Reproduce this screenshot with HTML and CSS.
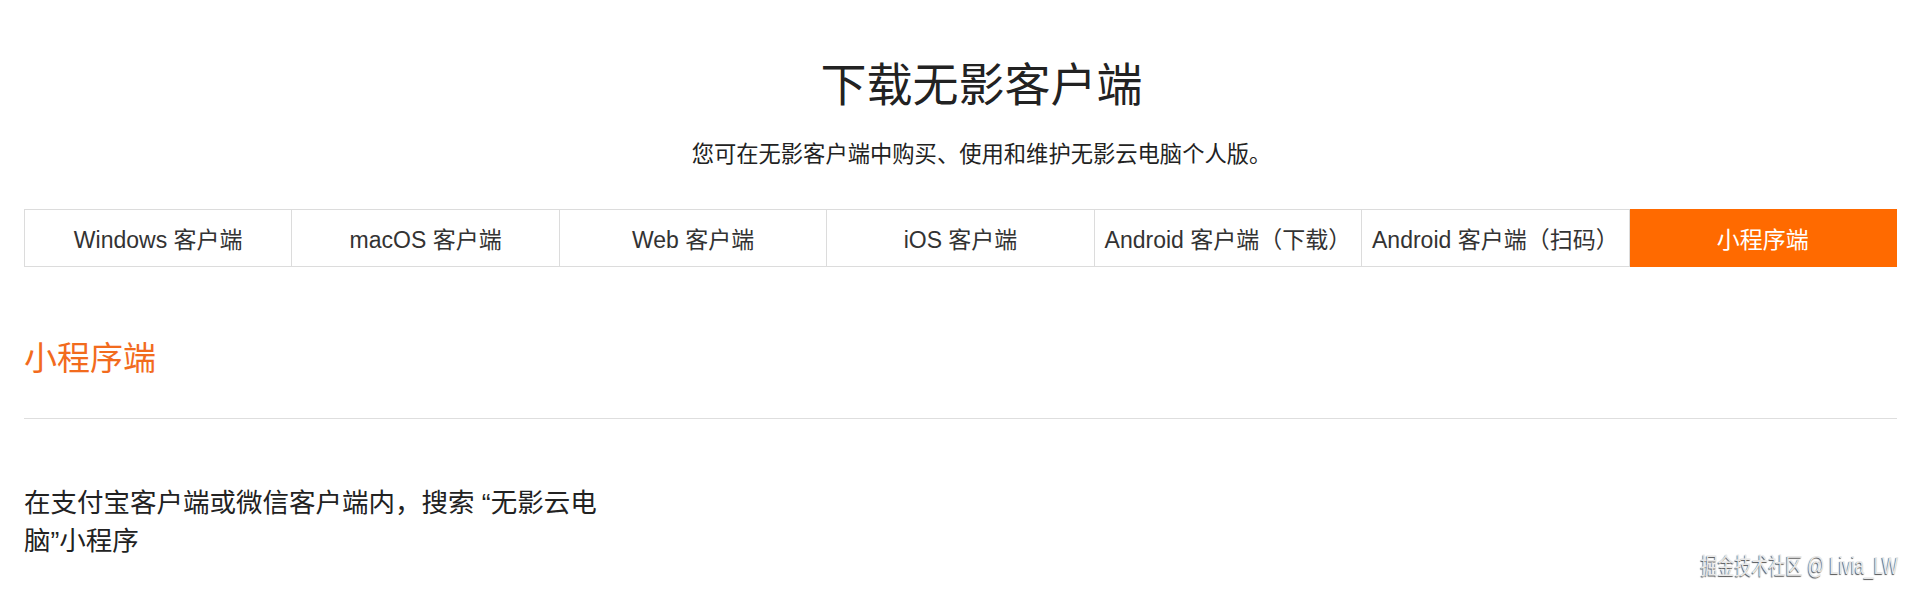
FILE: index.html
```html
<!DOCTYPE html>
<html lang="zh-CN">
<head>
    <meta charset="UTF-8">
    <meta name="viewport" content="width=device-width, initial-scale=1.0">
    <title>下载无影客户端</title>
    <link rel="stylesheet" href="styles.css">
</head>
<body>
    <div class="page">
        <div class="header">
            <h1>下载无影客户端</h1>
            <p class="subtitle">您可在无影客户端中购买、使用和维护无影云电脑个人版。</p>
        </div>

        <div class="tabs">
            <div class="tab">Windows 客户端</div>
            <div class="tab">macOS 客户端</div>
            <div class="tab">Web 客户端</div>
            <div class="tab">iOS 客户端</div>
            <div class="tab">Android 客户端（下载）</div>
            <div class="tab">Android 客户端（扫码）</div>
            <div class="tab active">小程序端</div>
        </div>

        <div class="panel">
            <h2>小程序端</h2>
            <p class="desc">在支付宝客户端或微信客户端内，搜索 “无影云电脑”小程序</p>
        </div>
    </div>

    <div class="watermark">掘金技术社区 @ Livia_LW</div>
</body>
</html>
```

FILE: styles.css
```css
body {
    margin: 0;
    font-family: "Liberation Sans", "Noto Sans CJK SC", sans-serif;
    color: #333;
    background-color: #fff;
}
.page {
    padding: 0 23px 0 24px;
}
.header {
    text-align: center;
    padding: 58px 0 0 42px;
}
.header h1 {
    margin: 0;
    font-size: 46px;
    line-height: 54px;
    font-weight: normal;
    color: #222;
}
.subtitle {
    margin: 28px 0 0;
    font-size: 22.3px;
    line-height: 30px;
    color: #222;
}
.tabs {
    display: grid;
    grid-template-columns: repeat(7, 1fr);
    margin-top: 39px;
    border: 1px solid #dcdcdc;
    border-right: none;
}
.tab {
    height: 56px;
    display: flex;
    align-items: center;
    justify-content: center;
    font-size: 23px;
    color: #333;
    border-right: 1px solid #dcdcdc;
    cursor: pointer;
}
.tab.active {
    background-color: #ff6a00;
    color: #fff;
    border-right-color: #ff6a00;
    margin: -1px 0;
    height: 58px;
}
.panel h2 {
    margin: 72px 0 0;
    padding-bottom: 39px;
    font-size: 33px;
    line-height: 40px;
    font-weight: normal;
    color: #f26b1d;
    border-bottom: 1px solid #dedede;
}
.desc {
    margin: 65px 0 0;
    max-width: 590px;
    font-size: 26.5px;
    line-height: 38px;
    color: #222;
}
.watermark {
    position: absolute;
    right: 22px;
    bottom: 20px;
    font-size: 23px;
    color: #e8e8e8;
    text-shadow: -1px 1px 1px #555;
    transform: scaleX(0.74);
    transform-origin: right center;
}
```
